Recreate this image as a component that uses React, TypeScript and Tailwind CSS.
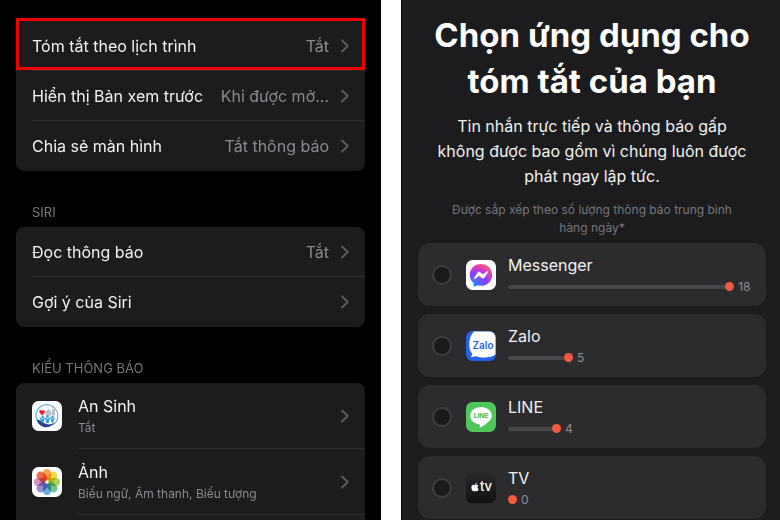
import React from 'react';
import { FaApple } from 'react-icons/fa';

const PETALS = ['#f9a13a', '#ecd93c', '#a9d04e', '#67c08a', '#62a9dd', '#9686cf', '#d08bc0', '#f0604a'];

const Chevron: React.FC = () => (
  <svg
    className="w-2 h-3.5 shrink-0 text-[#5f5f64]"
    viewBox="0 0 8 14"
    fill="none"
    stroke="currentColor"
    strokeWidth="1.8"
    strokeLinecap="round"
    strokeLinejoin="round"
    aria-hidden="true"
  >
    <path d="M1 1.500 6.800 7 1 12.500" />
  </svg>
);

const AnSinhIcon: React.FC = () => (
  <svg className="w-[30px] h-[30px] shrink-0" viewBox="0 0 30 30" aria-hidden="true">
    <rect width="30" height="30" rx="6.5" fill="#fff" />
    <path d="M5.2 19.5A10.8 10.8 0 0 1 21.5 6" fill="none" stroke="#5bb4dd" strokeWidth="1.3" />
    <path d="M20 5.2a10.8 10.8 0 0 1 5.6 11.500c-.4 3-2 5.400-4.500 7.100" fill="none" stroke="#93a6bd" strokeWidth="1.2" />
    <path d="M4.600 18.500c3.200.2 5.400 2 7.400 3.500 3 2 6.500 2 10.500-.5-3 4.500-7.500 5.500-11.500 4.200-3.300-1.100-5.700-3.900-6.400-7.200Z" fill="#24428f" />
    <path d="M10.500 14.200 7.700 11.400c-1.200-1.400.8-3 2.300-1.400 1.800-1.500 3.600.2 2.400 1.500Z" fill="#e3202b" stroke="#e3202b" strokeWidth=".6" />
    <path d="m13.500 10.500 3-2.500 3 2.500v4h-6Z M20 8h3v6.500h-3Z" fill="#b9c3cd" />
    <g fill="#37a0dc">
      <circle cx="10.600" cy="16" r="1.300" />
      <circle cx="15.500" cy="15.500" r="1.400" />
      <circle cx="20.400" cy="16" r="1.300" />
      <path d="m7.500 16 3 2 2.500-2-1.300 5.500h-2.200ZM12.800 15.700l2.700 2.200 2.700-2.200-1.500 6.600h-2.400ZM18 16l2.500 2 2.700-2-1.800 5.500h-2Z" />
    </g>
  </svg>
);

const PhotosIcon: React.FC = () => (
  <svg className="w-[30px] h-[30px] shrink-0" viewBox="0 0 30 30" aria-hidden="true">
    <rect width="30" height="30" rx="6.5" fill="#fff" />
    <g style={{ isolation: 'isolate' }}>
      {PETALS.map((color, i) => (
        <rect
          key={color}
          x="11"
          y="2"
          width="8"
          height="11.5"
          rx="4"
          fill={color}
          fillOpacity="0.95"
          transform={`rotate(${i * 45} 15 15)`}
          style={{ mixBlendMode: 'multiply' }}
        />
      ))}
    </g>
    <circle cx="15" cy="15" r="1" fill="#fff" fillOpacity=".85" />
  </svg>
);

const MessengerIcon: React.FC = () => (
  <svg className="w-[30px] h-[30px] shrink-0" viewBox="0 0 30 30" aria-hidden="true">
    <defs>
      <radialGradient id="messenger-fill" cx="0.2" cy="1" r="1.1">
        <stop offset="0" stopColor="#1690ff" />
        <stop offset="0.55" stopColor="#9a38fa" />
        <stop offset="0.8" stopColor="#d943b8" />
        <stop offset="1" stopColor="#ff6170" />
      </radialGradient>
    </defs>
    <rect width="30" height="30" rx="6.5" fill="#fff" />
    <path
      d="M15 4C8.700 4 3.800 8.600 3.800 14.800c0 3.300 1.300 6.100 3.500 8 .3.200.3.400.3.700l.1 2.100c0 .7.700 1.100 1.300.8l2.300-1c.2-.1.400-.1.600 0 1 .2 2 .4 3.100.4 6.300 0 11.200-4.700 11.200-10.900S21.300 4 15 4Z"
      fill="url(#messenger-fill)"
    />
    <path
      d="m8.300 18 3.300-5.200c.5-.8 1.600-1 2.400-.5l2.600 2c.2.200.5.200.8 0l3.500-2.700c.5-.3 1.100.2.800.7l-3.300 5.200c-.5.8-1.600 1-2.400.5l-2.600-2a.7.700 0 0 0-.8 0l-3.500 2.700c-.5.400-1.100-.2-.8-.7Z"
      fill="#fff"
      stroke="#fff"
      strokeWidth=".4"
    />
  </svg>
);

const ZaloIcon: React.FC = () => (
  <svg className="w-[30px] h-[30px] shrink-0" viewBox="0 0 30 30" aria-hidden="true">
    <rect width="30" height="30" rx="6.5" fill="#2563eb" />
    <path
      d="M8 .5C4.500 4 3.300 8.500 3.300 13.500c0 4.300 1.200 7.200 2.800 9.300.2 1.100-.4 2.300-1.600 3.100 1.800.2 3.500-.2 5-1 2.500 1.100 5.500 1.600 9 1.600 4.500 0 8.500-1 11-3.200V6.500A6 6 0 0 0 23.500.5Z"
      fill="#fff"
    />
    <text x="17" y="17.500" textAnchor="middle" fontFamily="Inter, sans-serif" fontSize="10" fontWeight="600" fill="#2563eb">
      Zalo
    </text>
  </svg>
);

const LineIcon: React.FC = () => (
  <svg className="w-[30px] h-[30px] shrink-0" viewBox="0 0 30 30" aria-hidden="true">
    <rect width="30" height="30" rx="6.5" fill="#4fc65a" />
    <path
      d="M15 5C9 5 4.200 8.900 4.200 13.700c0 4.300 3.800 7.900 8.900 8.600.9.200.9.700.7 1.700l-.2 1.200c0 .4.200.7.700.4 3.600-1.700 7.500-4.700 9.500-7 1.300-1.500 2-3 2-4.900C25.800 8.900 21 5 15 5Z"
      fill="#fff"
    />
    <text x="15" y="16.200" textAnchor="middle" fontFamily="Inter, sans-serif" fontSize="6.500" fontWeight="800" fill="#4fc65a">
      LINE
    </text>
  </svg>
);

const TvIcon: React.FC = () => (
  <span className="flex w-[30px] h-[30px] shrink-0 items-center justify-center rounded-md bg-linear-to-b from-[#29292b] to-[#111112] pb-0.5 text-[13px] leading-none font-medium text-white">
    <FaApple className="w-2.5 h-2.5" aria-hidden="true" />
    tv
  </span>
);

interface SettingRowProps {
  label: string;
  value?: string;
  divider?: boolean;
  highlighted?: boolean;
}

const SettingRow: React.FC<SettingRowProps> = ({ label, value, divider, highlighted }) => (
  <li className="relative pl-4">
    <button
      type="button"
      className={`flex w-full h-[50px] items-center pr-4 text-left whitespace-nowrap ${
        divider ? 'border-b border-[#2c2c2e]' : ''
      }`}
    >
      <span className="mr-auto text-[#f2f2f2]">{label}</span>
      {value && <span className="mr-3 text-[#8a8a90]">{value}</span>}
      <Chevron />
    </button>
    {highlighted && (
      <span className="absolute inset-x-0 -top-[3px] bottom-px border-3 border-[#f00000] pointer-events-none" />
    )}
  </li>
);

interface AppRowProps {
  icon: React.ReactNode;
  name: string;
  detail: string;
}

const AppRow: React.FC<AppRowProps> = ({ icon, name, detail }) => (
  <li>
    <button type="button" className="flex w-full h-[66px] items-center gap-4 pl-4 text-left">
      {icon}
      <span className="flex h-full flex-1 items-center justify-between border-b border-[#2c2c2e] pr-4">
        <span className="flex flex-col">
          <span className="leading-6 text-[#f2f2f2]">{name}</span>
          <span className="text-xs leading-5 text-[#8a8a90]">{detail}</span>
        </span>
        <Chevron />
      </span>
    </button>
  </li>
);

interface SummaryApp {
  id: string;
  name: string;
  count: number;
  share: number;
  icon: React.ReactNode;
}

// share is the bar's part of the row width, in percent
const SUMMARY_APPS: SummaryApp[] = [
  { id: 'messenger', name: 'Messenger', count: 18, share: 89, icon: <MessengerIcon /> },
  { id: 'zalo', name: 'Zalo', count: 5, share: 23, icon: <ZaloIcon /> },
  { id: 'line', name: 'LINE', count: 4, share: 18, icon: <LineIcon /> },
  { id: 'tv', name: 'TV', count: 0, share: 0, icon: <TvIcon /> },
];

const SummaryRow: React.FC<{ app: SummaryApp }> = ({ app }) => (
  <li>
    <label htmlFor={app.id} className="flex h-[63px] items-center rounded-xl bg-[#2c2c2e] px-3.5">
      <input
        id={app.id}
        type="checkbox"
        className="w-5 h-5 shrink-0 appearance-none rounded-full border-2 border-[#3f3f41] bg-[#1a1a1c] checked:bg-[#f25a43]"
      />
      <span className="ml-3.5 mr-3 flex">{app.icon}</span>
      <span className="flex min-w-0 flex-1 flex-col">
        <span className="leading-6 text-[#f2f2f2]">{app.name}</span>
        <span className="flex h-5 items-center">
          <span className="h-1 rounded-l-full bg-[#48484a]" style={{ width: `${app.share}%` }} />
          <span className="w-[9px] h-[9px] shrink-0 rounded-full bg-[#f25a43]" />
          <span className="ml-1 text-xs text-[#8e8e93]">{app.count}</span>
        </span>
      </span>
    </label>
  </li>
);

export default function App() {
  return (
    <main className="grid min-h-screen grid-cols-[381fr_379fr] gap-5 bg-white font-['Inter','Noto_Sans',sans-serif] text-base">
      <section className="flex flex-col bg-black px-4 pt-[21px]">
        <ul className="rounded-lg bg-[#1c1c1e]">
          <SettingRow label="Tóm tắt theo lịch trình" value="Tắt" divider highlighted />
          <SettingRow label="Hiển thị Bản xem trước" value="Khi được mở..." divider />
          <SettingRow label="Chia sẻ màn hình" value="Tắt thông báo" />
        </ul>

        <h2 className="flex h-14 items-end px-4 pb-[7px] text-[13px] leading-4 text-[#77777c]">SIRI</h2>
        <ul className="rounded-lg bg-[#1c1c1e]">
          <SettingRow label="Đọc thông báo" value="Tắt" divider />
          <SettingRow label="Gợi ý của Siri" />
        </ul>

        <h2 className="flex h-14 items-end px-4 pb-[7px] text-[13px] leading-4 text-[#77777c]">KIỂU THÔNG BÁO</h2>
        <ul className="flex-1 rounded-t-lg bg-[#1c1c1e]">
          <AppRow icon={<AnSinhIcon />} name="An Sinh" detail="Tắt" />
          <AppRow icon={<PhotosIcon />} name="Ảnh" detail="Biểu ngữ, Âm thanh, Biểu tượng" />
        </ul>
      </section>

      <section className="border-l border-black bg-[#1c1c1e] pt-3 pl-4 pr-3.5">
        <header className="text-center">
          <h1 className="text-[33px] leading-[46px] font-bold text-white">Chọn ứng dụng cho tóm tắt của bạn</h1>
          <p className="mt-2.5 px-4 leading-[25px] text-[#f2f2f2]">
            Tin nhắn trực tiếp và thông báo gấp không được bao gồm vì chúng luôn được phát ngay lập tức.
          </p>
          <p className="mt-3 px-5 text-xs leading-[18px] text-[#77777c]">
            Được sắp xếp theo số lượng thông báo trung bình hàng ngày*
          </p>
        </header>

        <ul className="mt-1.5 flex flex-col gap-2">
          {SUMMARY_APPS.map((app) => (
            <SummaryRow key={app.id} app={app} />
          ))}
        </ul>
      </section>
    </main>
  );
}
